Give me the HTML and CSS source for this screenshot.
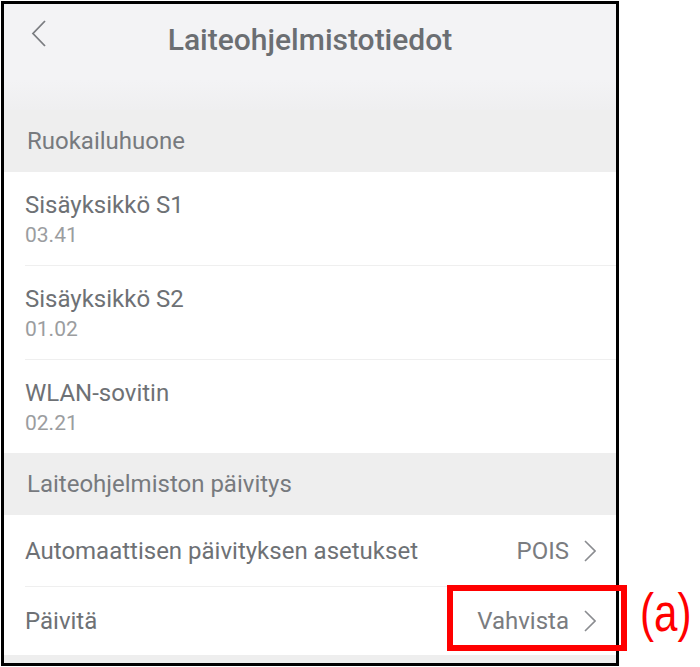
FILE: index.html
```
<!DOCTYPE html>
<html lang="fi">
<head>
    <meta charset="UTF-8">
    <meta name="viewport" content="width=device-width, initial-scale=1.0">
    <title>Laiteohjelmistotiedot</title>
    <link rel="stylesheet" href="styles.css">
</head>
<body>
    <div class="page">
        <div class="phone">
            <header class="topbar">
                <svg class="back" width="16" height="28" viewBox="0 0 16 28">
                    <polyline points="14,1 2,13.5 14,26" fill="none" stroke="#7a7c80" stroke-width="1.8"/>
                </svg>
                <h1 class="title">Laiteohjelmistotiedot</h1>
            </header>

            <div class="section-title">Ruokailuhuone</div>
            <ul class="list">
                <li class="item">
                    <div class="name">Sisäyksikkö S1</div>
                    <div class="version">03.41</div>
                </li>
                <li class="item">
                    <div class="name">Sisäyksikkö S2</div>
                    <div class="version">01.02</div>
                </li>
                <li class="item">
                    <div class="name">WLAN-sovitin</div>
                    <div class="version">02.21</div>
                </li>
            </ul>

            <div class="section-title">Laiteohjelmiston päivitys</div>
            <ul class="list">
                <li class="item row auto">
                    <span class="name">Automaattisen päivityksen asetukset</span>
                    <span class="value">POIS
                        <svg class="chev" width="13" height="22" viewBox="0 0 13 22">
                            <polyline points="2,1 12,11 2,21" fill="none" stroke="#8a8c90" stroke-width="1.6"/>
                        </svg>
                    </span>
                </li>
                <li class="item row update">
                    <span class="name">Päivitä</span>
                    <span class="value">Vahvista
                        <svg class="chev" width="13" height="22" viewBox="0 0 13 22">
                            <polyline points="2,1 12,11 2,21" fill="none" stroke="#8a8c90" stroke-width="1.6"/>
                        </svg>
                    </span>
                </li>
            </ul>
            <div class="bottom-strip"></div>
        </div>

        <div class="callout"></div>
        <div class="callout-label">(a)</div>
    </div>
</body>
</html>
```

FILE: styles.css
```
body {
    margin: 0;
    padding: 0;
    background-color: #fff;
    font-family: Roboto, "Noto Sans", sans-serif;
}
.page {
    position: relative;
    width: 700px;
    height: 667px;
    padding: 1px;
    box-sizing: border-box;
}
.phone {
    width: 612px;
    border: 3px solid #000;
    background-color: #fff;
}
.topbar {
    height: 106px;
    background: linear-gradient(#f3f3f5 72%, #efeff0);
    display: flex;
    align-items: flex-start;
    padding: 16px 0 0 27px;
    box-sizing: border-box;
}
.title {
    margin: 0;
    flex: 1;
    text-align: center;
    padding-right: 43px;
    font-size: 30px;
    font-weight: 500;
    line-height: 40px;
    color: #6b6e72;
}
.section-title {
    background-color: #eeeeee;
    color: #777a7e;
    font-size: 24px;
    line-height: 62px;
    height: 62px;
    padding-left: 23px;
}
.list {
    list-style: none;
    margin: 0;
    padding: 0 0 0 21px;
}
.item {
    padding: 19px 0 17px;
    border-bottom: 1px solid #efefef;
}
.item:last-child {
    border-bottom: none;
}
.name {
    font-size: 24px;
    line-height: 28px;
    color: #6e7175;
}
.version {
    margin-top: 3px;
    font-size: 21px;
    line-height: 26px;
    color: #9b9da0;
}
.row {
    display: flex;
    align-items: center;
    justify-content: space-between;
    padding: 0 20px 0 0;
}
.row.auto {
    height: 71px;
}
.row.update {
    height: 68px;
}
.value {
    display: flex;
    align-items: center;
    gap: 14px;
    font-size: 24px;
    color: #7a7c80;
}
.bottom-strip {
    height: 8px;
    background-color: #eeeeee;
}
.callout {
    position: absolute;
    left: 447px;
    top: 585px;
    width: 180px;
    height: 66px;
    border: 6px solid #ff0000;
    box-sizing: border-box;
}
.callout-label {
    position: absolute;
    left: 640px;
    top: 580px;
    font-family: "Liberation Sans", Arial, sans-serif;
    font-size: 54px;
    line-height: 64px;
    color: #ff0000;
    transform: scaleX(0.78);
    transform-origin: left center;
}
```
